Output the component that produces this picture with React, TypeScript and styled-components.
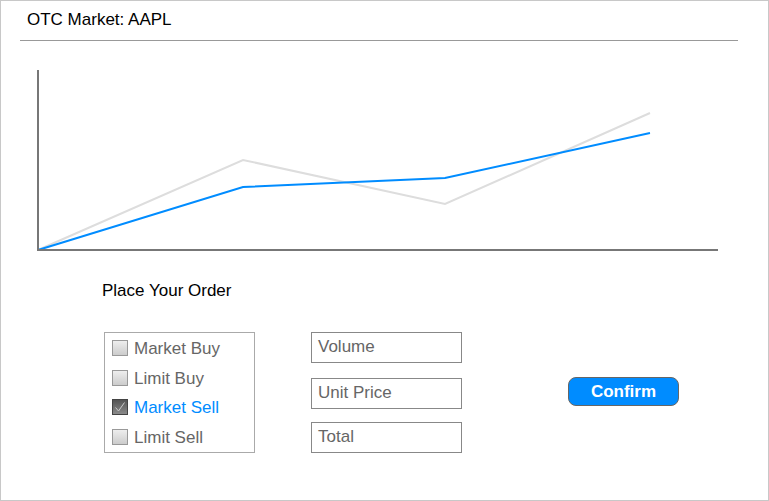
import React from "react";
import styled, { createGlobalStyle } from "styled-components";

const Global = createGlobalStyle`
  html, body { margin: 0; padding: 0; background: #fff; }
  body { font-family: "Liberation Sans", Arial, sans-serif; }
  * { box-sizing: border-box; }
`;

const Frame = styled.div`
  width: 769px;
  height: 501px;
  border: 1px solid #c8c8c8;
  background: #fff;
  display: flex;
  flex-direction: column;
`;

const Header = styled.div`
  margin: 0 30px 0 19px;
  height: 40px;
  border-bottom: 1px solid #999;
  padding: 9px 0 0 7px;
`;

const Title = styled.div`
  font-size: 17px;
  line-height: 20px;
  color: #000;
`;

const ChartWrap = styled.div`
  margin-left: 19px;
  height: 215px;
`;

const Section = styled.div`
  padding-left: 101px;
  margin-top: 25px;
`;

const SectionTitle = styled.div`
  font-size: 17px;
  line-height: 20px;
  color: #000;
`;

const OrderRow = styled.div`
  display: flex;
  align-items: flex-start;
  margin-top: 31px;
  padding-left: 103px;
`;

const OptionBox = styled.div`
  width: 151px;
  height: 121px;
  border: 1px solid #aaa;
  padding-left: 7px;
  display: flex;
  flex-direction: column;
`;

const Option = styled.div<{ $active?: boolean }>`
  height: 30px;
  display: flex;
  align-items: center;
  gap: 6px;
  font-size: 17px;
  color: ${(p) => (p.$active ? "#008cff" : "#666")};
`;

const Label = styled.span`
  padding-top: 2px;
`;

const Box = styled.span<{ $checked?: boolean }>`
  width: 16px;
  height: 16px;
  flex: none;
  border: 1px solid ${(p) => (p.$checked ? "#444" : "#999")};
  background: ${(p) =>
    p.$checked
      ? "linear-gradient(#555, #8a8a8a)"
      : "linear-gradient(#eeeeee, #cccccc)"};
  display: flex;
  align-items: center;
  justify-content: center;
`;

const Inputs = styled.div`
  display: flex;
  flex-direction: column;
  margin-left: 56px;
`;

const Field = styled.div<{ $gap: number }>`
  width: 151px;
  height: 31px;
  margin-top: ${(p) => p.$gap}px;
  border: 1px solid #888;
  padding: 4px 0 0 6px;
  font-size: 17px;
  line-height: 20px;
  color: #666;
`;

const Button = styled.button`
  margin: 45px 0 0 106px;
  width: 111px;
  height: 29px;
  border: 1px solid #666;
  border-radius: 8px;
  background: #008cff;
  color: #fff;
  font-family: "Liberation Sans", Arial, sans-serif;
  font-weight: bold;
  font-size: 17px;
  padding: 0;
`;

const options = [
  { label: "Market Buy" },
  { label: "Limit Buy" },
  { label: "Market Sell", checked: true },
  { label: "Limit Sell" },
];

export default function App() {
  return (
    <>
      <Global />
      <Frame>
        <Header>
          <Title>OTC Market: AAPL</Title>
        </Header>
        <ChartWrap>
          <svg width="710" height="215" viewBox="20 41 710 215">
            <polyline
              points="38,250 243,160 445,204 650,113"
              fill="none"
              stroke="#dddddd"
              strokeWidth="2"
            />
            <polyline
              points="38,250 243,187 445,178 650,133"
              fill="none"
              stroke="#008cff"
              strokeWidth="2"
            />
            <line x1="38" y1="70" x2="38" y2="251" stroke="#777" strokeWidth="2" />
            <line x1="37" y1="250" x2="718" y2="250" stroke="#777" strokeWidth="2" />
          </svg>
        </ChartWrap>
        <Section>
          <SectionTitle>Place Your Order</SectionTitle>
        </Section>
        <OrderRow>
          <OptionBox>
            {options.map((o) => (
              <Option key={o.label} $active={o.checked}>
                <Box $checked={o.checked}>
                  {o.checked && (
                    <svg width="12" height="12" viewBox="0 0 12 12">
                      <path d="M1.5 6.5 L4.5 10 L10.5 1.5" fill="none" stroke="#ccc" strokeWidth="1" />
                    </svg>
                  )}
                </Box>
                <Label>{o.label}</Label>
              </Option>
            ))}
          </OptionBox>
          <Inputs>
            <Field $gap={0}>Volume</Field>
            <Field $gap={15}>Unit Price</Field>
            <Field $gap={13}>Total</Field>
          </Inputs>
          <Button>Confirm</Button>
        </OrderRow>
      </Frame>
    </>
  );
}
